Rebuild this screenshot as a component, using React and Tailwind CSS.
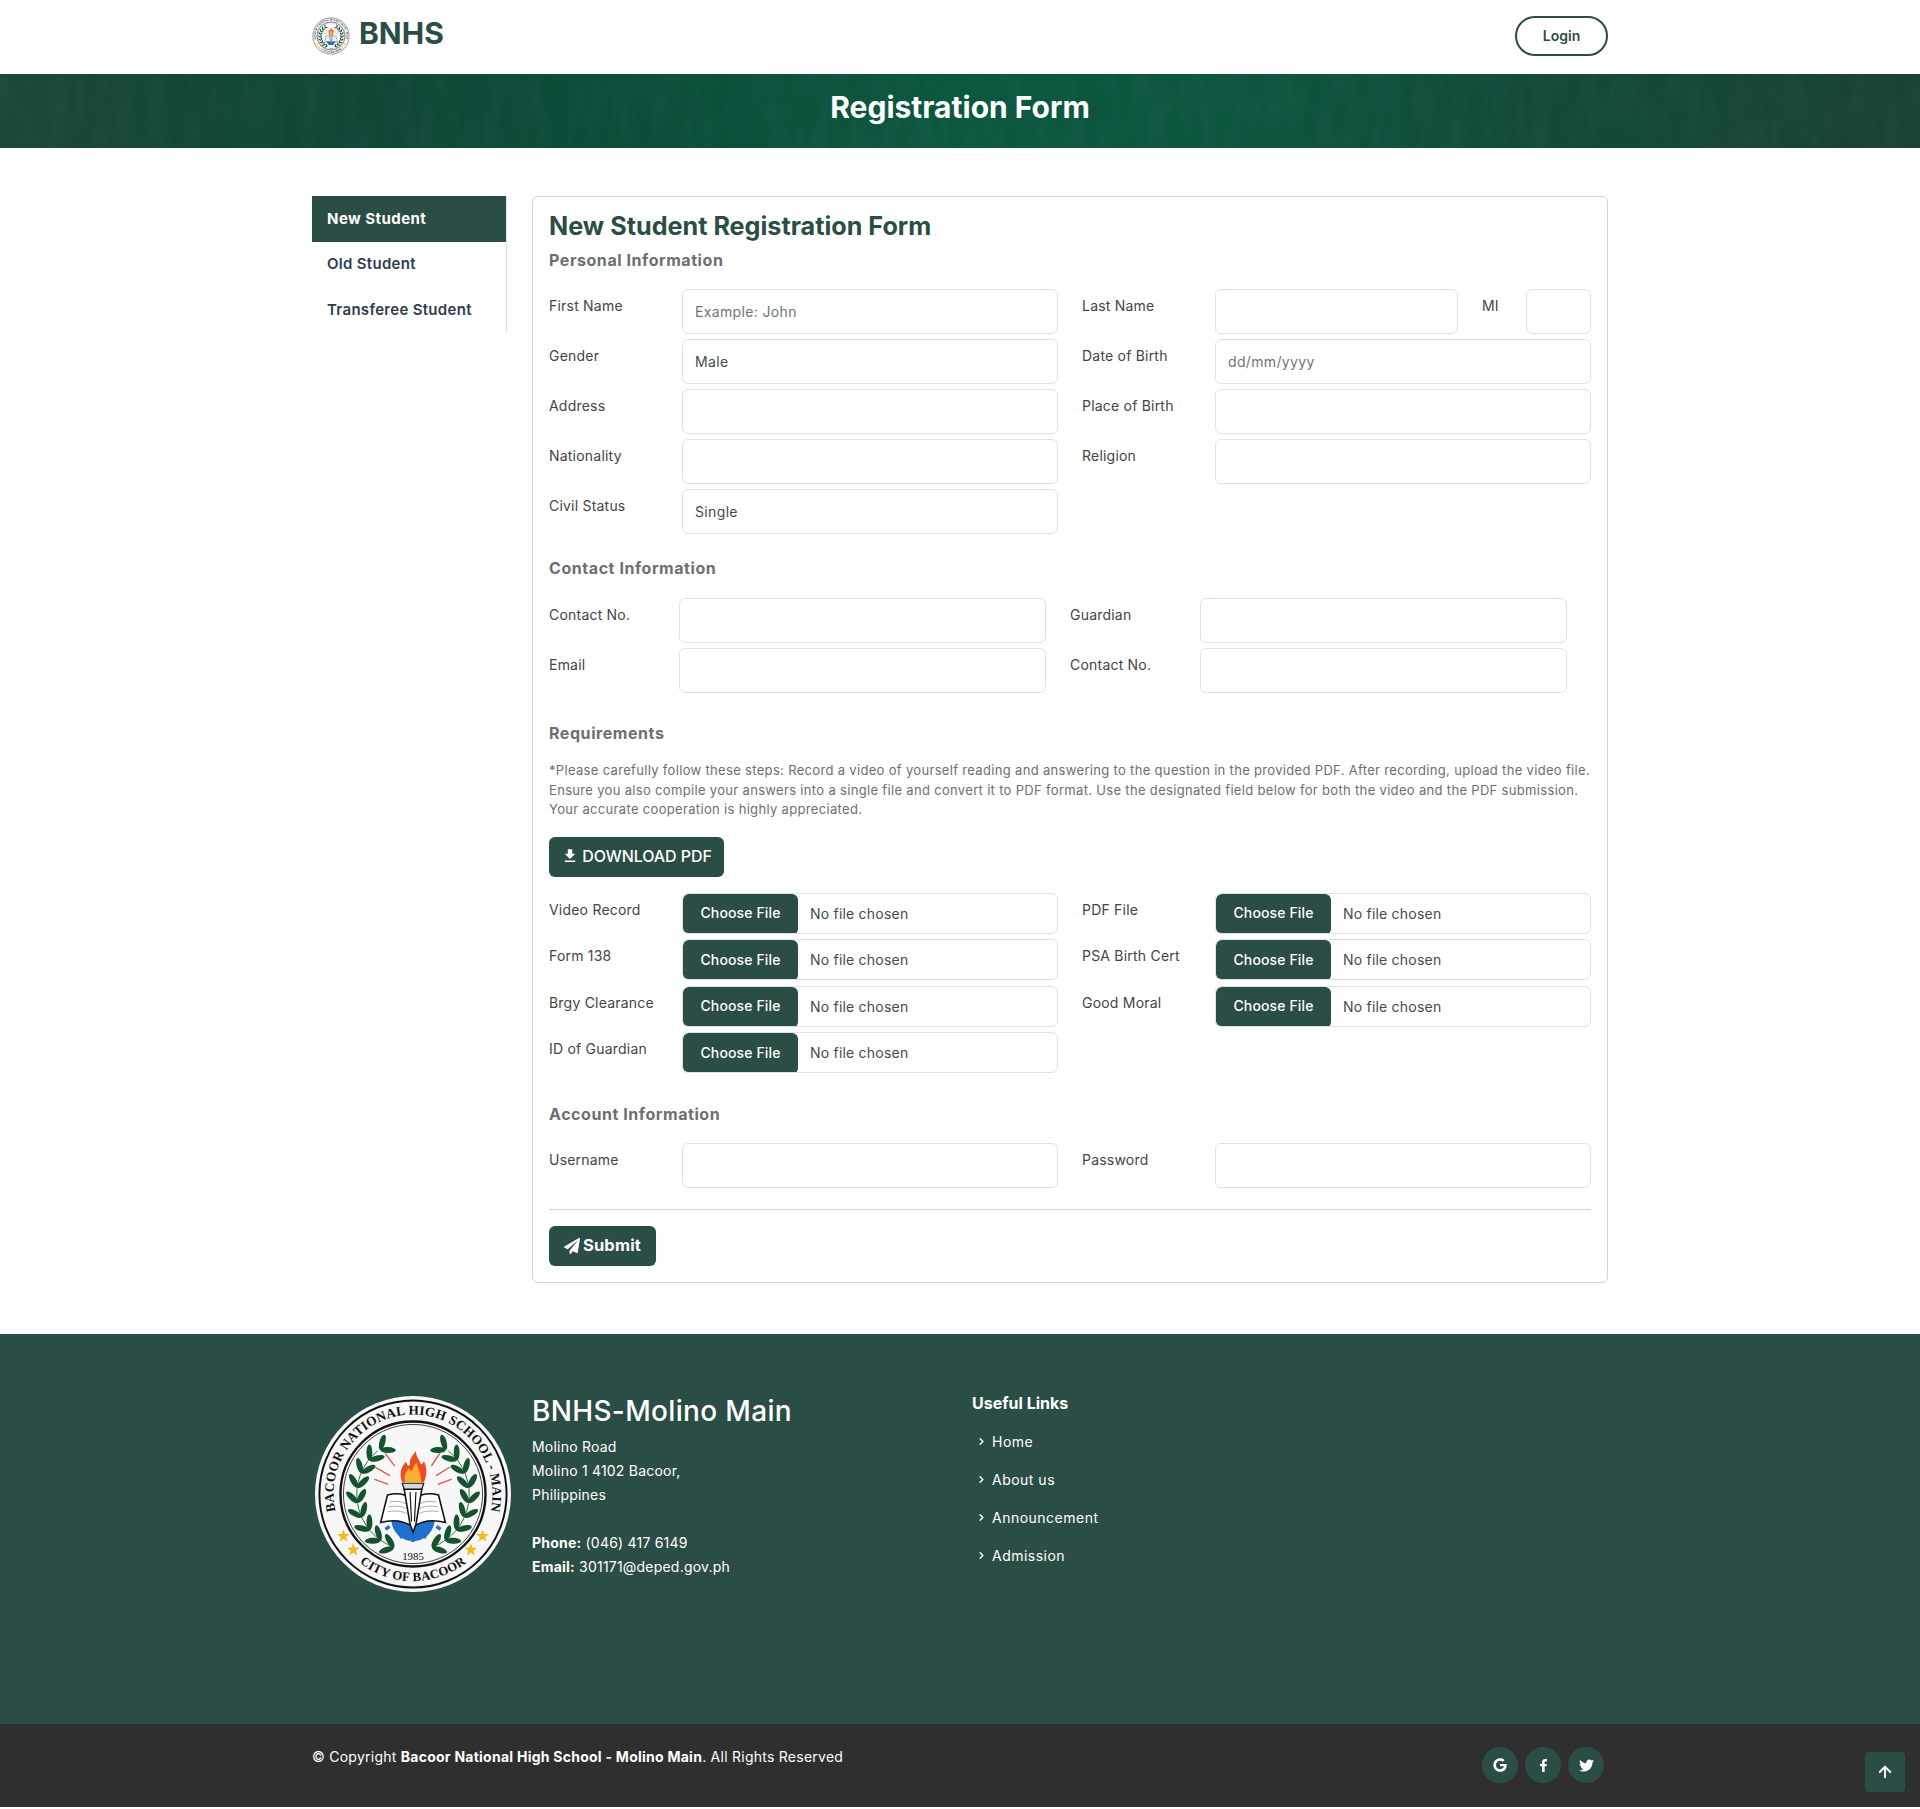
import React from 'react';
import { ArrowUp, ChevronRight } from 'lucide-react';
import { FaGoogle, FaFacebookF, FaTwitter, FaPaperPlane } from 'react-icons/fa';
import { MdFileDownload } from 'react-icons/md';

const inputClass = 'h-[45px] w-full rounded-[6px] border border-[#dee2e6] bg-white px-3 pb-[1px] text-[14px] tracking-[0.025em] text-[#444b52] outline-none placeholder:text-[#6c757d]';
const labelClass = 'pt-[6px] text-[14px] leading-[21px] tracking-[0.015em] text-[#444444]';
const headingClass = 'text-[16px] leading-[24px] font-bold tracking-[0.035em] text-[#6b6f73]';

const wreath = (() => {
  const leaves = [];
  const len = 16;
  for (let i = 0; i < 9; i++) {
    const deg = 110 + i * 15.5;
    const a = deg * (Math.PI / 180);
    const bx = 100 + 57 * Math.cos(a);
    const by = 101 + 57 * Math.sin(a);
    [-38, 38].forEach((off) => {
      const angle = deg + 90 + off;
      const rad = angle * (Math.PI / 180);
      const x = bx + (len / 2) * Math.cos(rad);
      const y = by + (len / 2) * Math.sin(rad);
      leaves.push({ x, y, angle });
      leaves.push({ x: 200 - x, y, angle: -angle });
    });
  }
  return leaves;
})();

const Star = ({ x, y }) => {
  const pts = [];
  for (let i = 0; i < 10; i++) {
    const r = i % 2 === 0 ? 7 : 2.8;
    const a = -Math.PI / 2 + (i * Math.PI) / 5;
    pts.push(`${(x + r * Math.cos(a)).toFixed(1)},${(y + r * Math.sin(a)).toFixed(1)}`);
  }
  return <polygon points={pts.join(' ')} fill="#f5b922" />;
};

const Seal = ({ className, id }) => (
  <svg viewBox="0 0 200 200" className={className}>
    <defs>
      <path id={`${id}-top`} d="M 29.9 140.5 A 81 81 0 1 1 170.1 140.5" />
      <path id={`${id}-bot`} d="M 23 144.5 A 89 89 0 0 0 177 144.5" />
    </defs>
    <circle cx="100" cy="100" r="100" fill="#f7f7f7" />
    <circle cx="100" cy="100" r="95.5" fill="none" stroke="#111" strokeWidth="2" />
    <circle cx="100" cy="100" r="74" fill="none" stroke="#111" strokeWidth="2.4" />
    <circle cx="100" cy="100" r="71" fill="none" stroke="#111" strokeWidth="0.8" />
    <text fontFamily="'Liberation Serif', serif" fontWeight="700" fontSize="13.5" fill="#111" letterSpacing="0.2">
      <textPath href={`#${id}-top`} startOffset="50%" textAnchor="middle">BACOOR NATIONAL HIGH SCHOOL - MAIN</textPath>
    </text>
    <text fontFamily="'Liberation Serif', serif" fontWeight="700" fontSize="13" fill="#111" letterSpacing="0.3">
      <textPath href={`#${id}-bot`} startOffset="50%" textAnchor="middle">CITY OF BACOOR</textPath>
    </text>
    <Star x={29} y={143} />
    <Star x={39} y={157} />
    <Star x={171} y={143} />
    <Star x={159} y={157} />
    <path d="M 80 154 A 57 57 0 0 1 64 56" fill="none" stroke="#2f6b3c" strokeWidth="1" />
    <path d="M 120 154 A 57 57 0 0 0 136 56" fill="none" stroke="#2f6b3c" strokeWidth="1" />
    {wreath.map((l, i) => (
      <ellipse key={i} cx={l.x} cy={l.y} rx={8} ry={3} fill="#14532d" transform={`rotate(${l.angle} ${l.x} ${l.y})`} />
    ))}
    <g stroke="#e4574c" strokeWidth="1.4" strokeLinecap="round">
      <path d="M 81 71 L 72 59" />
      <path d="M 76 81 L 62 73" />
      <path d="M 74 90 L 61 85" />
      <path d="M 119 71 L 127 59" />
      <path d="M 124 81 L 137 73" />
      <path d="M 126 90 L 139 85" />
    </g>
    <path d="M 78 126 A 22 22 0 0 0 122 126 Z" fill="#1f6fd0" />
    <path d="M 86 140 l 3 5 M 100 144 l 0 5 M 114 140 l -3 5 M 76 133 l -4 3 M 124 133 l 4 3" stroke="#1f6fd0" strokeWidth="3.5" />
    <path d="M 67 129 L 74 101 Q 88 97 99 105 L 99 133 Q 86 124 67 129 Z" fill="#fff" stroke="#111" strokeWidth="1.6" />
    <path d="M 133 129 L 126 101 Q 112 97 101 105 L 101 133 Q 114 124 133 129 Z" fill="#fff" stroke="#111" strokeWidth="1.6" />
    <path d="M 76 108 Q 86 106 94 110 M 75 113 Q 86 111 94 115 M 74 118 Q 86 116 94 120 M 124 108 Q 114 106 106 110 M 125 113 Q 114 111 106 115 M 126 118 Q 114 116 106 120" fill="none" stroke="#999" strokeWidth="0.8" />
    <path d="M 91 95 L 109 95 L 103 131 L 100 139 L 97 131 Z" fill="#fff" stroke="#111" strokeWidth="1.6" />
    <path d="M 97 98 L 98.5 128 M 103 98 L 101.5 128" stroke="#111" strokeWidth="1.2" />
    <path d="M 89 89 L 111 89 L 109 95 L 91 95 Z" fill="#d7d7d7" stroke="#111" strokeWidth="1.2" />
    <path d="M 89 88 C 85 78 89 71 93 67 C 94 71 96 72 97 70 C 96 64 100 60 103 56 C 103 63 108 66 108 70 C 110 69 111 67 111 66 C 115 74 114 82 111 88 Z" fill="#ee4d22" />
    <path d="M 92 88 C 90 82 93 76 96 74 C 97 77 99 77 100 74 C 101 70 103 69 104 68 C 104 73 109 78 108 88 Z" fill="#fbb034" />
    <text x="100" y="167" textAnchor="middle" fontFamily="'Liberation Serif', serif" fontSize="11" fill="#111">1985</text>
  </svg>
);

const Row = ({ label, children }) => (
  <div className="grid grid-cols-[133px_376px]">
    <label className={labelClass}>{label}</label>
    {children}
  </div>
);

const ContactRow = ({ label, children }) => (
  <div className="flex">
    <label className={`${labelClass} w-[130px] shrink-0`}>{label}</label>
    <div className="w-[367px]">{children}</div>
  </div>
);

const FileField = ({ label }) => (
  <div className="grid grid-cols-[133px_376px]">
    <label className={labelClass}>{label}</label>
    <input
      type="file"
      className="h-[41px] w-full overflow-hidden rounded-[6px] border border-[#dee2e6] text-[14px] tracking-[0.015em] text-[#444b52] file:mr-3 file:h-[41px] file:w-[115px] file:cursor-pointer file:rounded-[6px] file:border-0 file:bg-[#2a4d45] file:pb-[3px] file:text-[14px] file:font-medium file:tracking-[0.01em] file:text-white"
    />
  </div>
);

const footerLinks = ['Home', 'About us', 'Announcement', 'Admission'];

const App = () => {
  return (
    <div className="relative min-h-[1809px] bg-white font-['Inter',sans-serif]">
      <header className="h-[74px] bg-white">
        <div className="mx-auto flex h-[71px] w-[1296px] items-center justify-between">
          <div className="flex items-center gap-[9px]">
            <Seal className="h-[38px] w-[38px]" id="nav" />
            <span className="pb-[5px] text-[30px] font-bold leading-none text-[#2a4d45]">BNHS</span>
          </div>
          <button className="h-[40px] w-[93px] rounded-[20px] border-2 border-[#2a4d45] text-[14px] font-semibold text-[#2a4d45]">Login</button>
        </div>
      </header>

      <div className="relative flex h-[74px] items-center justify-center overflow-hidden bg-[linear-gradient(90deg,#1a4738_0%,#0f4636_18%,#0b4e3a_35%,#0c5740_50%,#0c553f_64%,#124a39_80%,#1a4232_100%)]">
        <svg className="absolute inset-0 h-full w-full opacity-[0.06]" preserveAspectRatio="none">
          <filter id="grain">
            <feTurbulence type="fractalNoise" baseFrequency="0.06 0.02" numOctaves="3" seed="4" />
            <feColorMatrix values="0 0 0 0 1  0 0 0 0 1  0 0 0 0 1  0.9 0 0 0 -0.3" />
          </filter>
          <rect width="100%" height="100%" filter="url(#grain)" />
        </svg>
        <h1 className="relative pb-[7px] text-[30px] font-bold text-white">Registration Form</h1>
      </div>

      <main className="mx-auto flex w-[1296px] items-start gap-[25px] pb-[51px] pt-[48px]">
        <nav className="h-[137px] w-[195px] shrink-0 border-r border-[#dee2e6]">
          <a className="block h-[46px] bg-[#2a4d45] pl-[15px] text-[15px] font-bold leading-[46px] tracking-[0.03em] text-white">New Student</a>
          <a className="block h-[46px] pl-[15px] text-[15px] font-semibold leading-[44px] tracking-[0.02em] text-[#2c3e50]">Old Student</a>
          <a className="block h-[46px] pl-[15px] text-[15px] font-semibold leading-[44px] tracking-[0.02em] text-[#2c3e50]">Transferee Student</a>
        </nav>

        <form className="h-[1087px] w-[1076px] rounded-[6px] border border-[#d4d4d4] px-4 pt-[11px]">
          <h2 className="text-[25.2px] font-bold leading-[36px] text-[#2a4d45]">New Student Registration Form</h2>
          <h3 className={`mt-[4px] ${headingClass}`}>Personal Information</h3>

          <div className="mt-[17px] grid grid-cols-[509px_509px] gap-x-[24px] gap-y-[5px]">
            <Row label="First Name"><input className={inputClass} placeholder="Example: John" /></Row>
            <div className="flex">
              <label className={`${labelClass} w-[133px] shrink-0`}>Last Name</label>
              <input className={`${inputClass} !w-[243px]`} />
              <label className={`${labelClass} ml-[24px] w-[44px] shrink-0`}>MI</label>
              <input className={`${inputClass} !w-[65px]`} />
            </div>
            <Row label="Gender">
              <select className={`${inputClass} appearance-none`} defaultValue="Male">
                <option>Male</option>
                <option>Female</option>
              </select>
            </Row>
            <Row label="Date of Birth"><input className={`${inputClass} tracking-[0.05em]`} placeholder="dd/mm/yyyy" /></Row>
            <Row label="Address"><input className={inputClass} /></Row>
            <Row label="Place of Birth"><input className={inputClass} /></Row>
            <Row label="Nationality"><input className={inputClass} /></Row>
            <Row label="Religion"><input className={inputClass} /></Row>
            <Row label="Civil Status">
              <select className={`${inputClass} appearance-none`} defaultValue="Single">
                <option>Single</option>
                <option>Married</option>
              </select>
            </Row>
          </div>

          <h3 className={`mt-[22px] ${headingClass}`}>Contact Information</h3>
          <div className="mt-[18px] grid grid-cols-[497px_497px] gap-x-[24px] gap-y-[5px]">
            <ContactRow label="Contact No."><input className={inputClass} /></ContactRow>
            <ContactRow label="Guardian"><input className={inputClass} /></ContactRow>
            <ContactRow label="Email"><input className={inputClass} /></ContactRow>
            <ContactRow label="Contact No."><input className={inputClass} /></ContactRow>
          </div>

          <h3 className={`mt-[28px] ${headingClass}`}>Requirements</h3>
          <p className="mt-[16px] whitespace-nowrap text-[13px] leading-[19.5px] tracking-[0.025em] text-[#6b6f73]">
            *Please carefully follow these steps: Record a video of yourself reading and answering to the question in the provided PDF. After recording, upload the video file.<br />
            Ensure you also compile your answers into a single file and convert it to PDF format. Use the designated field below for both the video and the PDF submission.<br />
            Your accurate cooperation is highly appreciated.
          </p>
          <button type="button" className="mt-[17px] flex h-[40px] w-[175px] items-center justify-center gap-[3px] rounded-[6px] bg-[#2a4d45] pb-[1px] text-[16px] font-medium tracking-[-0.005em] text-white">
            <MdFileDownload size={18} />
            DOWNLOAD PDF
          </button>

          <div className="mt-[16px] grid grid-cols-[509px_509px] gap-x-[24px] gap-y-[5.5px]">
            <FileField label="Video Record" />
            <FileField label="PDF File" />
            <FileField label="Form 138" />
            <FileField label="PSA Birth Cert" />
            <FileField label="Brgy Clearance" />
            <FileField label="Good Moral" />
            <FileField label="ID of Guardian" />
          </div>

          <h3 className={`mt-[29px] ${headingClass}`}>Account Information</h3>
          <div className="mt-[17px] grid grid-cols-[509px_509px] gap-x-[24px]">
            <Row label="Username"><input className={inputClass} /></Row>
            <Row label="Password"><input type="password" className={inputClass} /></Row>
          </div>
          <hr className="mt-[21px] border-[#cfcfcf]" />
          <button type="button" className="mt-[16px] flex h-[40px] w-[107px] items-center justify-center gap-[3px] rounded-[6px] bg-[#2a4d45] pb-[1px] text-[16.5px] font-bold tracking-[0.01em] text-white">
            <FaPaperPlane size={16} />
            Submit
          </button>
        </form>
      </main>

      <footer className="h-[390px] bg-[#2a4e45] text-white">
        <div className="mx-auto flex w-[1296px] pt-[62px]">
          <Seal className="h-[196px] w-[196px] shrink-0 translate-x-[3px]" id="foot" />
          <div className="ml-[24px] w-[440px]">
            <h2 className="text-[28px] font-medium leading-[30px] tracking-[0.012em]">BNHS-Molino Main</h2>
            <p className="mt-[9px] text-[14px] leading-[24px] tracking-[0.015em]">
              Molino Road<br />Molino 1 4102 Bacoor,<br />Philippines
            </p>
            <p className="mt-[24px] text-[14px] leading-[24px] tracking-[0.015em]">
              <strong className="font-bold">Phone:</strong> (046) 417 6149<br />
              <strong className="font-bold">Email:</strong> 301171@deped.gov.ph
            </p>
          </div>
          <div>
            <h4 className="-mt-[5px] text-[16px] font-bold leading-[24px]">Useful Links</h4>
            <ul className="mt-[7px]">
              {footerLinks.map((link) => (
                <li key={link} className="flex h-[38px] items-center gap-[5px] pl-[4px] text-[14px] tracking-[0.035em]">
                  <ChevronRight size={11} strokeWidth={3} />
                  <span>{link}</span>
                </li>
              ))}
            </ul>
          </div>
        </div>
      </footer>

      <div className="h-[83px] bg-[#2f2f2f] text-white">
        <div className="mx-auto flex w-[1296px] items-start justify-between">
          <p className="pt-[22px] text-[14px] leading-[21px] tracking-[0.018em]">
            © Copyright <strong className="font-bold">Bacoor National High School - Molino Main</strong>. All Rights Reserved
          </p>
          <div className="mr-[4px] flex gap-[7px] pt-[23px]">
            <a className="flex h-[36px] w-[36px] items-center justify-center rounded-full bg-[#2a4e45]"><FaGoogle size={14} /></a>
            <a className="flex h-[36px] w-[36px] items-center justify-center rounded-full bg-[#2a4e45]"><FaFacebookF size={13} /></a>
            <a className="flex h-[36px] w-[36px] items-center justify-center rounded-full bg-[#2a4e45]"><FaTwitter size={15} /></a>
          </div>
        </div>
      </div>

      <a className="absolute left-[1865px] top-[1752px] flex h-[40px] w-[40px] items-center justify-center rounded-[4px] bg-[#2a4e45] text-white">
        <ArrowUp size={18} strokeWidth={2.5} />
      </a>
    </div>
  );
};

export default App;
